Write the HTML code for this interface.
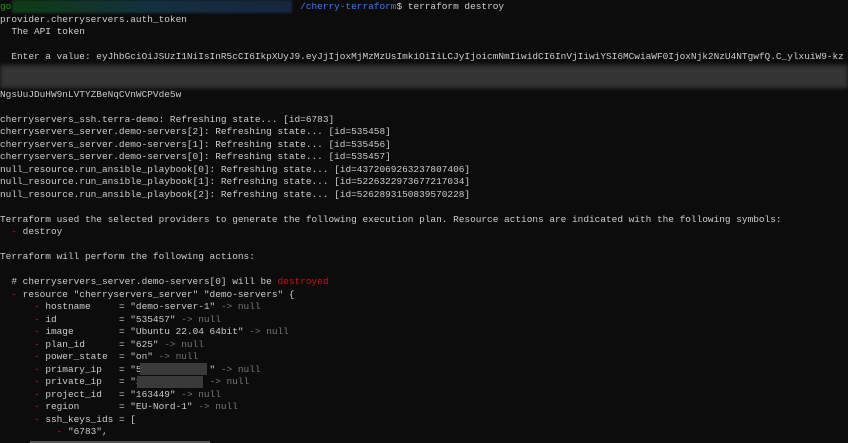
<!DOCTYPE html>
<html><head><meta charset="utf-8"><style>
html,body{margin:0;padding:0;background:#0c0c0c;width:848px;height:443px;overflow:hidden}
pre{margin:0;font-family:"Liberation Mono",monospace;font-size:9.45px;line-height:12.5px;color:#cccccc;white-space:pre;position:absolute;left:0;top:1px}
.r{color:#c50f1f}.g{color:#767676}.b{color:#3b78ff}.gr{color:#13a10e}
.blur{position:absolute;left:0;top:65px;width:848px;height:23px;background:#353535;filter:blur(2px)}
.pb{position:absolute;left:12px;top:0;width:280px;height:13px;background:linear-gradient(90deg,#0f3d14,#143040 50%,#17263f);filter:blur(1px)}
.m1{position:absolute;left:140px;top:363px;width:67px;height:12px;background:#3a3a3a}
.m2{position:absolute;left:137px;top:376px;width:66px;height:12px;background:#3a3a3a}
.sb{position:absolute;left:30px;top:441px;width:180px;height:2px;background:#555}
</style></head><body>
<pre><span class="gr">go</span><span>                                                   </span><span class="b">/cherry-terraform</span>$ terraform destroy
provider.cherryservers.auth_token
  The API token

  Enter a value: eyJhbGciOiJSUzI1NiIsInR5cCI6IkpXUyJ9.eyJjIjoxMjMzMzUsImkiOiIiLCJyIjoicmNmIiwidCI6InVjIiwiYSI6MCwiaWF0IjoxNjk2NzU4NTgwfQ.C_ylxuiW9-kz


NgsUuJDuHW9nLVTYZBeNqCVnWCPVde5w

cherryservers_ssh.terra-demo: Refreshing state... [id=6783]
cherryservers_server.demo-servers[2]: Refreshing state... [id=535458]
cherryservers_server.demo-servers[1]: Refreshing state... [id=535456]
cherryservers_server.demo-servers[0]: Refreshing state... [id=535457]
null_resource.run_ansible_playbook[0]: Refreshing state... [id=4372069263237807406]
null_resource.run_ansible_playbook[1]: Refreshing state... [id=5226322973677217034]
null_resource.run_ansible_playbook[2]: Refreshing state... [id=5262893150839570228]

Terraform used the selected providers to generate the following execution plan. Resource actions are indicated with the following symbols:
  <span class="r">-</span> destroy

Terraform will perform the following actions:

  # cherryservers_server.demo-servers[0] will be <span class="r">destroyed</span>
  <span class="r">-</span> resource "cherryservers_server" "demo-servers" {
      <span class="r">-</span> hostname     = "demo-server-1" <span class="g">-> null</span>
      <span class="r">-</span> id           = "535457" <span class="g">-> null</span>
      <span class="r">-</span> image        = "Ubuntu 22.04 64bit" <span class="g">-> null</span>
      <span class="r">-</span> plan_id      = "625" <span class="g">-> null</span>
      <span class="r">-</span> power_state  = "on" <span class="g">-> null</span>
      <span class="r">-</span> primary_ip   = "5            " <span class="g">-> null</span>
      <span class="r">-</span> private_ip   = "1            <span class="g">-> null</span>
      <span class="r">-</span> project_id   = "163449" <span class="g">-> null</span>
      <span class="r">-</span> region       = "EU-Nord-1" <span class="g">-> null</span>
      <span class="r">-</span> ssh_keys_ids = [
          <span class="r">-</span> "6783",
</pre>
<div class="pb"></div>
<div class="blur"></div>
<div class="m1"></div><div class="m2"></div>
<div class="sb"></div>
</body></html>
